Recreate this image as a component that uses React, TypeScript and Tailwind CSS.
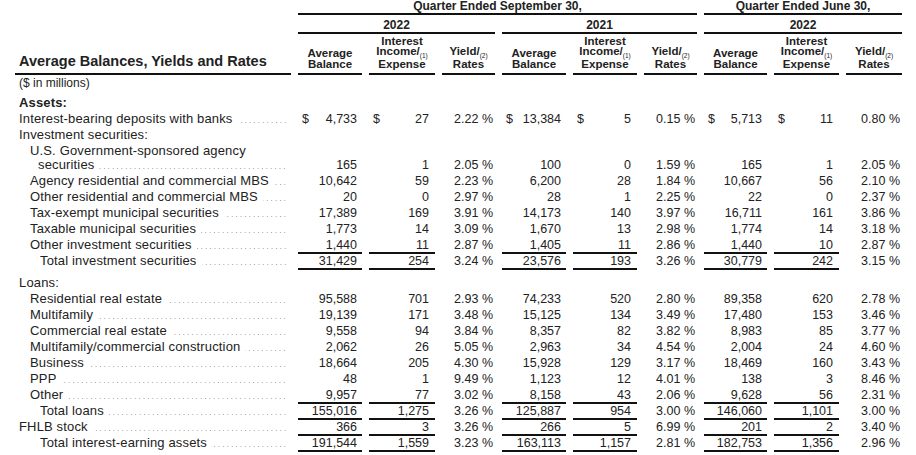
const G = "grid grid-cols-[276px_64px_66px_53px_64px_64px_53px_63px_65px_56px] gap-x-[7px]";

type Row = {
  label: string;
  level: number;
  v?: string[];
  line?: boolean;
  dollar?: boolean;
  bold?: boolean;
  wrap?: string;
  gapTop?: boolean;
};

const rows: Row[] = [
  { label: "Assets:", level: 0, bold: true },
  { label: "Interest-bearing deposits with banks", level: 0, dollar: true, v: ["4,733", "27", "2.22 %", "13,384", "5", "0.15 %", "5,713", "11", "0.80 %"] },
  { label: "Investment securities:", level: 0 },
  { label: "U.S. Government-sponsored agency", wrap: "securities", level: 1, v: ["165", "1", "2.05 %", "100", "0", "1.59 %", "165", "1", "2.05 %"] },
  { label: "Agency residential and commercial MBS", level: 1, v: ["10,642", "59", "2.23 %", "6,200", "28", "1.84 %", "10,667", "56", "2.10 %"] },
  { label: "Other residential and commercial MBS", level: 1, v: ["20", "0", "2.97 %", "28", "1", "2.25 %", "22", "0", "2.37 %"] },
  { label: "Tax-exempt municipal securities", level: 1, v: ["17,389", "169", "3.91 %", "14,173", "140", "3.97 %", "16,711", "161", "3.86 %"] },
  { label: "Taxable municipal securities", level: 1, v: ["1,773", "14", "3.09 %", "1,670", "13", "2.98 %", "1,774", "14", "3.18 %"] },
  { label: "Other investment securities", level: 1, line: true, v: ["1,440", "11", "2.87 %", "1,405", "11", "2.86 %", "1,440", "10", "2.87 %"] },
  { label: "Total investment securities", level: 2, line: true, v: ["31,429", "254", "3.24 %", "23,576", "193", "3.26 %", "30,779", "242", "3.15 %"] },
  { label: "Loans:", level: 0, gapTop: true },
  { label: "Residential real estate", level: 1, v: ["95,588", "701", "2.93 %", "74,233", "520", "2.80 %", "89,358", "620", "2.78 %"] },
  { label: "Multifamily", level: 1, v: ["19,139", "171", "3.48 %", "15,125", "134", "3.49 %", "17,480", "153", "3.46 %"] },
  { label: "Commercial real estate", level: 1, v: ["9,558", "94", "3.84 %", "8,357", "82", "3.82 %", "8,983", "85", "3.77 %"] },
  { label: "Multifamily/commercial construction", level: 1, v: ["2,062", "26", "5.05 %", "2,963", "34", "4.54 %", "2,004", "24", "4.60 %"] },
  { label: "Business", level: 1, v: ["18,664", "205", "4.30 %", "15,928", "129", "3.17 %", "18,469", "160", "3.43 %"] },
  { label: "PPP", level: 1, v: ["48", "1", "9.49 %", "1,123", "12", "4.01 %", "138", "3", "8.46 %"] },
  { label: "Other", level: 1, line: true, v: ["9,957", "77", "3.02 %", "8,158", "43", "2.06 %", "9,628", "56", "2.31 %"] },
  { label: "Total loans", level: 2, line: true, v: ["155,016", "1,275", "3.26 %", "125,887", "954", "3.00 %", "146,060", "1,101", "3.00 %"] },
  { label: "FHLB stock", level: 0, line: true, v: ["366", "3", "3.26 %", "266", "5", "6.99 %", "201", "2", "3.40 %"] },
  { label: "Total interest-earning assets", level: 2, line: true, v: ["191,544", "1,559", "3.23 %", "163,113", "1,157", "2.81 %", "182,753", "1,356", "2.96 %"] },
];

const indent = ["pl-1", "pl-[15px]", "pl-[25px]"];

const Dots = () => (
  <span className="ml-[5px] mr-1 h-[12px] flex-1 self-start bg-[radial-gradient(circle,#a8a8a8_0.6px,transparent_0.9px)] bg-[length:4.4px_3px] bg-repeat-x bg-[position:right_bottom]" />
);

const Head = ({ lines, note }: { lines: string[]; note?: string }) => (
  <div className="flex flex-col items-center justify-end border-b-2 border-[#111] pb-[4px] text-center text-[11.5px] font-bold leading-[10.5px]">
    {lines.map((l, i) => (
      <span key={i} className="whitespace-nowrap">
        {l}
        {note && i === lines.length - 2 ? (
          <span className="relative top-[3px] text-[6.5px] font-normal">{note}</span>
        ) : null}
      </span>
    ))}
  </div>
);

const DataRow = ({ r }: { r: Row }) => {
  const tall = !!r.wrap;
  return (
    <div className={`${G} ${tall ? "h-[30px]" : "h-4"} ${r.gapTop ? "mt-[6px]" : ""}`}>
      <div className={`flex flex-col justify-end text-[13px] tracking-[0.15px] ${indent[r.level]} ${r.bold ? "font-bold" : ""}`}>
        {r.wrap ? <div className="h-[14px] leading-[14px] whitespace-nowrap">{r.label}</div> : null}
        <div className={`flex h-4 border-b-2 border-transparent leading-[14px] ${r.wrap ? "pl-2" : ""}`}>
          <span className="whitespace-nowrap">{r.wrap ?? r.label}</span>
          {r.v ? <Dots /> : null}
        </div>
      </div>
      {(r.v ?? Array(9).fill("")).map((val, i) => {
        const isYield = i % 3 === 2;
        const under = r.line && !isYield;
        return (
          <div key={i} className="flex flex-col justify-end">
            <div
              className={`flex h-4 items-start justify-between border-b-2 leading-[14px] ${under ? "border-[#111]" : "border-transparent"} ${isYield ? "pr-[2px]" : i % 3 === 0 ? "pl-1 pr-[5px]" : "pl-1 pr-[6px]"}`}
            >
              <span>{r.dollar && !isYield ? "$" : ""}</span>
              <span className="whitespace-nowrap">{val}</span>
            </div>
          </div>
        );
      })}
    </div>
  );
};

export default function App() {
  return (
    <div className="h-[455px] w-[916px] overflow-hidden bg-white pl-[15px] font-['Liberation_Sans',Arial,sans-serif] text-[12.5px] text-[#222]">
      <div className={`${G} h-[15px]`}>
        <div />
        <div className="col-span-6 border-b-2 border-[#111] text-center text-[12px] font-bold leading-[13px]">
          Quarter Ended September 30,
        </div>
        <div className="col-span-3 border-b-2 border-[#111] text-center text-[12px] font-bold leading-[13px]">
          Quarter Ended June 30,
        </div>
      </div>
      <div className={`${G} h-[19px]`}>
        <div />
        {["2022", "2021", "2022"].map((y, i) => (
          <div key={i} className="col-span-3 border-b-2 border-[#111] pt-[4px] text-center text-[12px] font-bold leading-[12px]">
            {y}
          </div>
        ))}
      </div>
      <div className={`${G} h-[41px]`}>
        <div className="flex items-end border-b-2 border-[#111] pb-[4px] pl-1 text-[14.5px] font-bold leading-[16px]">
          Average Balances, Yields and Rates
        </div>
        {[0, 1, 2].map((g) => (
          <div key={g} className="contents">
            <Head lines={["Average", "Balance"]} />
            <Head lines={["Interest", "Income/", "Expense"]} note="(1)" />
            <Head lines={["Yield/", "Rates"]} note="(2)" />
          </div>
        ))}
      </div>
      <div className="h-4 pl-1 text-[12px] leading-4">($ in millions)</div>
      <div className="mt-[5px]">
        {rows.map((r, i) => (
          <DataRow key={i} r={r} />
        ))}
      </div>
    </div>
  );
}
